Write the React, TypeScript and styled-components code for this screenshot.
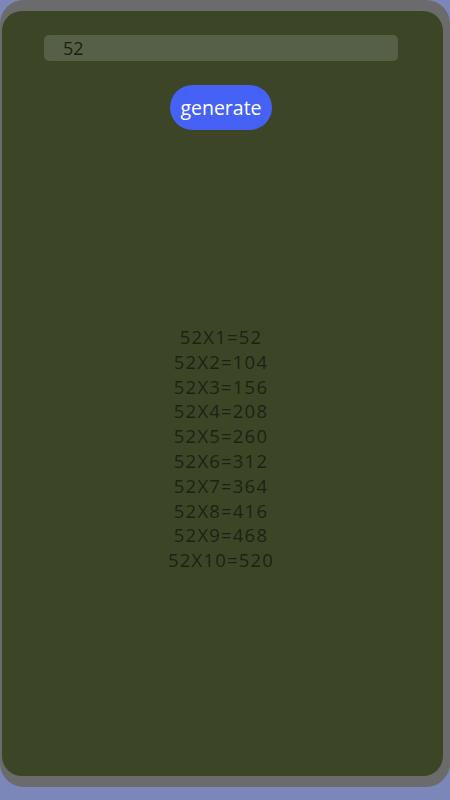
import React, { useState } from "react";
import styled, { createGlobalStyle } from "styled-components";

const Global = createGlobalStyle`
  html, body { margin: 0; padding: 0; background: #7b86b9; }
  body { font-family: "Open Sans", "Noto Sans", sans-serif; }
`;

const Frame = styled.div`
  box-sizing: border-box;
  width: 450px;
  height: 787px;
  background: #6b6b6b;
  border-radius: 24px;
  padding: 11px 7px 11px 2px;
  display: flex;
`;

const Card = styled.div`
  flex: 1;
  background: #3c4626;
  border-radius: 20px;
  display: flex;
  flex-direction: column;
  align-items: center;
  padding: 24px 3px 0 0;
`;

const Input = styled.input`
  box-sizing: border-box;
  width: 354px;
  height: 26px;
  border: none;
  outline: none;
  border-radius: 5px;
  background: #566046;
  color: #1a1f12;
  font-family: "Open Sans", sans-serif;
  font-size: 18px;
  padding: 0 0 0 19px;
`;

const Button = styled.button`
  margin-top: 24px;
  width: 102px;
  height: 45px;
  border: none;
  border-radius: 23px;
  background: #4661f6;
  color: #ffffff;
  font-family: "Open Sans", sans-serif;
  font-size: 19.5px;
  font-weight: 500;
  padding: 0;
`;

const List = styled.div`
  margin-top: 195px;
  display: flex;
  flex-direction: column;
  align-items: center;
`;

const Row = styled.div`
  font-size: 18.5px;
  line-height: 24.8px;
  letter-spacing: 1.2px;
  color: #1c2213;
`;

export default function App() {
  const [n] = useState(52);
  return (
    <>
      <Global />
      <Frame>
        <Card>
          <Input defaultValue="52" />
          <Button>generate</Button>
          <List>
            {Array.from({ length: 10 }, (_, i) => (
              <Row key={i}>
                {n}X{i + 1}={n * (i + 1)}
              </Row>
            ))}
          </List>
        </Card>
      </Frame>
    </>
  );
}
